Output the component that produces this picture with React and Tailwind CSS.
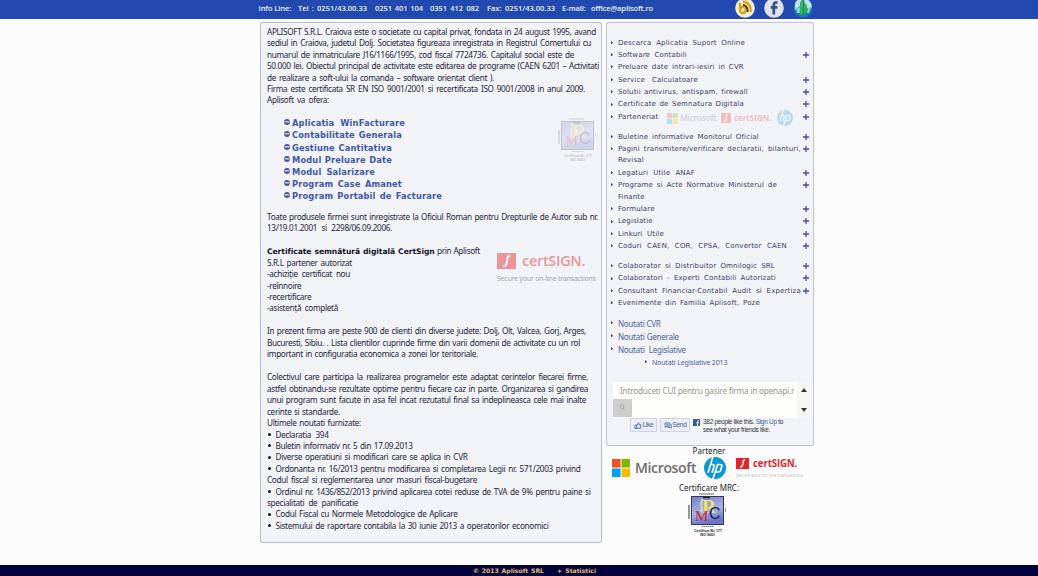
import React from "react";

function Line({ w = "", className = "", children }) {
  return (
    <div className={`h-[11.42px] leading-[11.42px] whitespace-nowrap ${w ? w + " [text-align-last:justify]" : ""} ${className}`}>
      {children}
    </div>
  );
}

function Bullet({ w, children }) {
  return (
    <div className="flex h-[11.42px] items-center">
      <span className="mr-[5px] ml-[0.5px] size-[3px] rounded-full bg-[#15152f]" />
      <Line w={w}>{children}</Line>
    </div>
  );
}

const products = [
  ["Aplicatia WinFacturare", "w-[113px]"],
  ["Contabilitate Generala", "w-[110px]"],
  ["Gestiune Cantitativa", "w-[100px]"],
  ["Modul Preluare Date", "w-[100px]"],
  ["Modul Salarizare", "w-[83px]"],
  ["Program Case Amanet", "w-[110px]"],
  ["Program Portabil de Facturare", "w-[150px]"],
];

const menuGroups = [
  [
    { lines: [["Descarca Aplicatia Suport Online", "w-[127px]"]] },
    { lines: [["Software Contabili", "w-[69px]"]], plus: true },
    { lines: [["Preluare date intrari-iesiri in CVR", "w-[126px]"]] },
    { lines: [["Service Calculatoare", "w-[80px]"]], plus: true },
    { lines: [["Solutii antivirus, antispam, firewall", "w-[130px]"]], plus: true },
    { lines: [["Certificate de Semnatura Digitala", "w-[126px]"]], plus: true },
    { lines: [["Parteneriat", "w-[43px]"]], plus: true, logos: true },
  ],
  [
    { lines: [["Buletine informative Monitorul Oficial", "w-[141px]"]], plus: true },
    { lines: [["Pagini transmitere/verificare declaratii, bilanturi,", "w-[183px]"], ["Revisal", "w-[28px]"]], plus: true },
    { lines: [["Legaturi Utile ANAF", "w-[77px]"]], plus: true },
    { lines: [["Programe si Acte Normative Ministerul de", "w-[159px]"], ["Finante", "w-[28px]"]], plus: true },
    { lines: [["Formulare", "w-[38px]"]], plus: true },
    { lines: [["Legislatie", "w-[37px]"]], plus: true },
    { lines: [["Linkuri Utile", "w-[46px]"]], plus: true },
    { lines: [["Coduri CAEN, COR, CPSA, Convertor CAEN", "w-[169px]"]], plus: true },
  ],
  [
    { lines: [["Colaborator si Distribuitor Omnilogic SRL", "w-[157px]"]], plus: true },
    { lines: [["Colaboratori - Experti Contabili Autorizati", "w-[158px]"]], plus: true },
    { lines: [["Consultant Financiar-Contabil Audit si Expertiza", "w-[183px]"]], plus: true },
    { lines: [["Evenimente din Familia Aplisoft, Poze", "w-[142px]"]] },
  ],
];

function Arrow() {
  return (
    <svg viewBox="0 0 3 4" className="mt-[4.2px] mr-[4.5px] h-[3.4px] w-[2.4px] shrink-0">
      <path d="M0 0L3 2L0 4Z" fill="#4a4a66" />
    </svg>
  );
}

function Plus() {
  return (
    <svg viewBox="0 0 6 6" className="mt-[3px] size-[6px] shrink-0">
      <path d="M3 0V6M0 3H6" stroke="#4a4aa6" strokeWidth="1.3" />
    </svg>
  );
}

function MenuItem({ item }) {
  return (
    <li className={`flex items-start ${item.lines.length > 1 ? "h-[23.9px]" : "h-[12.4px]"}`}>
      <Arrow />
      <div className="flex flex-1 items-start">
        <div>
          {item.lines.map(([text, w]) => (
            <div key={text} className={`h-[11.5px] leading-[12.4px] whitespace-nowrap [text-align-last:justify] ${w}`}>{text}</div>
          ))}
        </div>
        {item.logos && (
          <div className="ml-[6px] flex h-[15px] items-center tracking-normal opacity-25">
            <MsSquares className="size-[11px]" />
            <span className="ml-[2px] w-[37px] font-['Open_Sans',sans-serif] text-[8.5px] font-semibold tracking-[-0.3px] text-[#737373]">Microsoft</span>
            <CertMark className="ml-[4px] size-[10px]" />
            <span className="ml-[3px] w-[43px] font-['Open_Sans',sans-serif] text-[8px] font-bold text-[#e2202c]">certSIGN.</span>
            <Hp className="size-[16px]" />
          </div>
        )}
      </div>
      {item.plus && <Plus />}
    </li>
  );
}

function MsSquares({ className }) {
  return (
    <svg viewBox="0 0 18 18" className={className}>
      <path fill="#f15022" d="M0 0h8.5v8.5H0z" />
      <path fill="#7db700" d="M9.5 0H18v8.5H9.500z" />
      <path fill="#00a1f1" d="M0 9.500h8.500V18H0z" />
      <path fill="#ffb900" d="M9.500 9.500H18V18H9.500z" />
    </svg>
  );
}

function CertMark({ className }) {
  return (
    <svg viewBox="0 0 18 16" preserveAspectRatio="none" className={className}>
      <rect width="18" height="16" fill="#e8202c" />
      <path d="M12.500 2.500C9.500 2.500 10 5 9.500 8S9 13.500 5.500 13.500" fill="none" stroke="#fff" strokeWidth="2" />
    </svg>
  );
}

function Hp({ className }) {
  return (
    <svg viewBox="0 0 22 22" className={className}>
      <circle cx="11" cy="11" r="11" fill="#0b96d6" />
      <g fill="none" stroke="#fff" strokeWidth="1.7">
        <path d="M8.800 0L4 15.700M6.500 7.500H8.800Q10.600 7.500 10 9.500L8 15.700" />
        <path d="M13.700 7L8.900 22M13.300 7.500H16.200Q18.300 7.500 17.700 9.700L16.600 13.200Q16.100 15 14.300 15H11.300" />
      </g>
    </svg>
  );
}

function Mrc({ className }) {
  return (
    <svg viewBox="0 0 40 44" className={className}>
      <defs>
        <linearGradient id="mrc" x1="0" y1="0" x2="0.3" y2="1">
          <stop offset="0" stopColor="#7680c4" />
          <stop offset="0.6" stopColor="#a9b2e4" />
          <stop offset="1" stopColor="#6875c8" />
        </linearGradient>
      </defs>
      <path d="M12 1H27" stroke="#555" strokeWidth="1.100" strokeDasharray="1.7 .3" />
      <path d="M2 12V26" stroke="#555" strokeWidth="1.400" strokeDasharray="1.7 .3" />
      <path d="M38.500 15V19" stroke="#999" strokeWidth="1" />
      <rect x="4.500" y="3.500" width="32" height="28" fill="url(#mrc)" stroke="#35355c" />
      <path d="M16 4.500H23" stroke="#222" strokeWidth="1.500" />
      <path d="M14.500 19V8Q14.500 6.500 16 6.500" stroke="#d8d8c8" strokeWidth="2" fill="none" />
      <text x="15" y="20" fontFamily="Liberation Serif, serif" fontSize="19" fontWeight="bold" fill="#eee45c">R</text>
      <text x="8" y="28" fontFamily="Liberation Serif, serif" fontSize="15" fill="#cc2538">M</text>
      <text x="22" y="26" fontFamily="Liberation Sans, sans-serif" fontSize="16" fill="#171c5c">C</text>
      <path d="M15 33.500H27" stroke="#777" strokeWidth="1" strokeDasharray="1.500 .5" />
      <text x="7" y="38.500" textLength="28" lengthAdjust="spacingAndGlyphs" fontFamily="Liberation Sans, sans-serif" fontSize="3.800" fontWeight="bold" fill="#222">Certificat Nr. 177</text>
      <text x="13" y="43.300" textLength="15" lengthAdjust="spacingAndGlyphs" fontFamily="Liberation Sans, sans-serif" fontSize="3.600" fontWeight="bold" fill="#222">ISO 9001</text>
    </svg>
  );
}

function Header() {
  return (
    <header className="flex h-[19px] shrink-0 overflow-hidden bg-[#2149b0] pl-[258.500px]">
      <div className="flex items-start font-['Open_Sans',sans-serif] text-[7.5px] leading-[16px] font-semibold whitespace-nowrap text-[#edf1fb]">
        <span className="w-[31px] tracking-[-0.100px] [text-align-last:justify]">Info Line:</span>
        <span className="ml-[8.500px] w-[69px] [text-align-last:justify]">Tel : 0251/43.00.33</span>
        <span className="ml-[8px] w-[48px] [text-align-last:justify]">0251 401 104</span>
        <span className="ml-[7px] w-[49px] [text-align-last:justify]">0351 412 082</span>
        <span className="ml-[8px] w-[68px] [text-align-last:justify]">Fax: 0251/43.00.33</span>
        <span className="ml-[7px] w-[91px] tracking-[-0.100px] [text-align-last:justify]">E-mail: office@aplisoft.ro</span>
        <div className="-mt-[2.500px] ml-[82px] flex gap-[9px]">
          <svg viewBox="0 0 20 20" className="size-[20px]">
            <circle cx="10" cy="10" r="9.800" fill="#f3efe0" />
            <g fill="none" stroke="#d7a313" strokeWidth="2.300">
              <path d="M5 5V12.500M5 11.500a3 3 0 1 1 3 3.500q-3 0-3-3" />
              <path d="M8 6.800Q13 7.500 12.700 14" stroke="#44351a" strokeWidth="1.700" />
              <path d="M8 3.500Q16.500 5 15.800 14" />
            </g>
          </svg>
          <svg viewBox="0 0 20 20" className="size-[20px]">
            <circle cx="10" cy="10" r="9.800" fill="#dfe3ee" />
            <path d="M13.500 4.500H12Q9.800 4.500 9.800 7V16.500M6.800 9.300H13.300" fill="none" stroke="#354f8c" strokeWidth="2.700" />
          </svg>
          <svg viewBox="0 0 20 20" className="size-[20px]">
            <circle cx="10" cy="10" r="9.500" fill="#1d79ae" />
            <path d="M2 5Q5 0 9 1L7 8L2 12ZM11 1Q18 1 19 9L15 11L12 7Z" fill="#b8e3ea" />
            <path d="M7 4L10 2V16L7 17ZM11 5L14 7V14L11 16Z" fill="#36b44a" />
            <path d="M3 11L7 9V15L4 15ZM15 10L18 10L16 15H14Z" fill="#79d6cf" />
          </svg>
        </div>
      </div>
    </header>
  );
}

function MainPanel() {
  return (
    <main className="h-[521px] w-[342px] rounded-[3px] border border-[#bdbfc7] bg-[#f2f3f6] pt-[3px] pl-[6px] font-['Noto_Sans',sans-serif] text-[8.2px] tracking-[-0.32px] text-[#262640] shadow-[0_0_1px_#c5c7ce]">
      <Line w="w-[329px]">APLISOFT S.R.L. Craiova este o societate cu capital privat, fondata in 24 august 1995, avand</Line>
      <Line w="w-[324px]">sediul in Craiova, judetul Dolj. Societatea figureaza inregistrata in Registrul Comertului cu</Line>
      <Line w="w-[307px]">numarul de inmatriculare J16/1166/1995, cod fiscal 7724736. Capitalul social este de</Line>
      <Line w="w-[332px]">50.000 lei. Obiectul principal de activitate este editarea de programe (CAEN 6201 – Activitati</Line>
      <Line w="w-[227px]">de realizare a soft-ului la comanda – software orientat client ).</Line>
      <Line w="w-[318px]">Firma este certificata SR EN ISO 9001/2001 si recertificata ISO 9001/2008 in anul 2009.</Line>
      <Line w="w-[62px]">Aplisoft va ofera:</Line>
      <div className="mt-[11.500px] flex items-start">
        <ul className="w-[274px] pl-[17px] font-['DejaVu_Sans',sans-serif] text-[8.3px] font-bold tracking-[0.150px] text-[#3f58ab]">
          {products.map(([name, w]) => (
            <li key={name} className="flex h-[12.1px] items-start leading-[12.1px]">
              <svg viewBox="0 0 6 6" className="mt-[2px] mr-[2px] size-[6px] shrink-0">
                <circle cx="3" cy="3" r="2.900" fill="#49558d" />
                <path d="M.8 2.800H5.200" stroke="#e8ebf5" strokeWidth="1.200" />
              </svg>
              <span className={`whitespace-nowrap [text-align-last:justify] ${w}`}>{name}</span>
            </li>
          ))}
        </ul>
        <Mrc className="mt-[0.500px] ml-[16px] h-[44px] w-[40px] tracking-normal opacity-25" />
      </div>
      <Line className="mt-[9px]" w="w-[331px]">Toate produsele firmei sunt inregistrate la Oficiul Roman pentru Drepturile de Autor sub nr.</Line>
      <Line w="w-[125px]">13/19.01.2001 si 2298/06.09.2006.</Line>
      <div className="mt-[11.500px] flex items-start">
        <div className="w-[230px]">
          <Line w="w-[213px]"><b className="font-['DejaVu_Sans',sans-serif] text-[7.600px] tracking-[-0.050px] text-[#14142e]">Certificate semnătură digitală CertSign</b> prin Aplisoft</Line>
          <Line w="w-[85px]">S.R.L partener autorizat</Line>
          <Line w="w-[83px]">-achiziție certificat nou</Line>
          <Line w="w-[36px]">-reînnoire</Line>
          <Line w="w-[47px]">-recertificare</Line>
          <Line w="w-[71px]">-asistență completă</Line>
        </div>
        <div className="mt-[8px] w-[98px] font-['Open_Sans',sans-serif] opacity-45">
          <div className="flex items-center">
            <CertMark className="h-[16px] w-[19px]" />
            <span className="ml-[6px] text-[14.500px] leading-[16px] font-semibold tracking-[-0.300px] text-[#e8202c]">certSIGN.</span>
          </div>
          <div className="mt-[5px] w-[97px] text-[6.900px] leading-[9px] tracking-[-0.150px] whitespace-nowrap text-[#333] [text-align-last:justify]">Secure your on-line transactions</div>
        </div>
      </div>
      <Line className="mt-[11.500px]" w="w-[319px]">In prezent firma are peste 900 de clienti din diverse judete: Dolj, Olt, Valcea, Gorj, Arges,</Line>
      <Line w="w-[313px]">Bucuresti, Sibiu. . Lista clientilor cuprinde firme din varii domenii de activitate cu un rol</Line>
      <Line w="w-[211px]">important in configuratia economica a zonei lor teritoriale.</Line>
      <Line className="mt-[12px]" w="w-[321px]">Colectivul care participa la realizarea programelor este adaptat cerintelor fiecarei firme,</Line>
      <Line w="w-[321px]">astfel obtinandu-se rezultate optime pentru fiecare caz in parte. Organizarea si gandirea</Line>
      <Line w="w-[319px]">unui program sunt facute in asa fel incat rezutatul final sa indeplineasca cele mai inalte</Line>
      <Line w="w-[73px]">cerinte si standarde.</Line>
      <Line w="w-[94px]">Ultimele noutati furnizate:</Line>
      <Bullet w="w-[53px]">Declaratia 394</Bullet>
      <Bullet w="w-[137px]">Buletin informativ nr. 5 din 17.09.2013</Bullet>
      <Bullet w="w-[192px]">Diverse operatiuni si modificari care se aplica in CVR</Bullet>
      <Bullet w="w-[305px]">Ordonanta nr. 16/2013 pentru modificarea si completarea Legii nr. 571/2003 privind</Bullet>
      <Line w="w-[210px]">Codul fiscal si reglementarea unor masuri fiscal-bugetare</Line>
      <Bullet w="w-[315px]">Ordinul nr. 1436/852/2013 privind aplicarea cotei reduse de TVA de 9% pentru paine si</Bullet>
      <Line w="w-[91px]">specialitati de panificatie</Line>
      <Bullet w="w-[182px]">Codul Fiscal cu Normele Metodologice de Aplicare</Bullet>
      <Bullet w="w-[273px]">Sistemului de raportare contabila la 30 iunie 2013 a operatorilor economici</Bullet>
    </main>
  );
}

function CompanySearch() {
  return (
    <div className="mt-[13px] ml-[2px] flex h-[36px] w-[200px]">
      <div className="flex w-[184px] flex-col bg-[#fdfdfb]">
        <div className="h-[17px] overflow-hidden pl-[7px] text-[8.200px] leading-[17px] tracking-[-0.200px] whitespace-nowrap text-[#99988f]">
          <div className="w-[170px] [text-align-last:justify]">Introduceti CUI pentru gasire firma in openapi.r</div>
        </div>
        <div className="flex h-[18px] w-[19px] items-center justify-center bg-[#cdcdcd]">
          <svg viewBox="0 0 8 8" className="size-[7px]" fill="none" stroke="#a5a5a5">
            <circle cx="3.500" cy="3" r="2.200" />
            <path d="M5 5L7 7.500" />
          </svg>
        </div>
      </div>
      <div className="flex flex-1 flex-col items-center justify-between bg-[#f5f5f3] py-[6px] pr-[3px]">
        <svg viewBox="0 0 6 4" className="h-[4px] w-[6px]"><path d="M0 4L3 0L6 4Z" fill="#333" /></svg>
        <svg viewBox="0 0 6 4" className="h-[4px] w-[6px]"><path d="M0 0L3 4L6 0Z" fill="#333" /></svg>
      </div>
    </div>
  );
}

function SocialBar() {
  return (
    <div className="ml-[19px] flex items-start font-['Liberation_Sans',sans-serif] text-[6.500px] text-[#333]">
      <div className="mt-[0.500px] flex h-[14px] w-[27px] items-center justify-center gap-[1px] rounded-[1px] border border-[#cad4e7] bg-[#eceef5] tracking-[-0.300px] text-[#3b5998]">
        <svg viewBox="0 0 9 8" className="h-[7px] w-[8px]" fill="none" stroke="#3b5998" strokeWidth=".9"><path d="M1 3.500H3V7.500H1ZM3 4L5 .8Q6.300 1 5.500 3.300H8L7.500 7.200H3" /></svg>
        Like
      </div>
      <div className="mt-[0.500px] ml-[3px] flex h-[14px] w-[30px] items-center justify-center gap-[1px] rounded-[1px] border border-[#cad4e7] bg-[#eceef5] tracking-[-0.300px] text-[#3b5998]">
        <svg viewBox="0 0 9 8" className="h-[7px] w-[8px]" fill="none" stroke="#3b5998" strokeWidth=".8"><path d="M1 1H6.500V5H3L1.500 6.500V5H1ZM7 3H8.300V7L7 6.200H4M2.500 2.500H5.200M2.500 3.700H5" /></svg>
        Send
      </div>
      <svg viewBox="0 0 7 7" className="mt-[1px] ml-[3px] size-[7px]"><rect width="7" height="7" rx=".5" fill="#3b5998" /><path d="M6 1.700H5.200Q4.600 1.700 4.600 2.500V7M3.400 3.800H5.800" stroke="#fff" fill="none" /></svg>
      <div className="mt-[0.500px] ml-[3px] leading-[7.600px] tracking-[-0.300px] whitespace-nowrap">
        <div className="w-[78px] [text-align-last:justify]">382 people like this. <span className="text-[#3b5998]">Sign Up</span> to</div>
        <div className="w-[64px] [text-align-last:justify]">see what your friends like.</div>
      </div>
    </div>
  );
}

function Sidebar() {
  return (
    <aside className="ml-[4px] w-[208px] font-['Noto_Sans',sans-serif]">
      <div className="h-[424px] rounded-[3px] border border-[#c3c5ce] bg-[#f2f3f6] pt-[13.500px] pr-[4px] pl-[4px] shadow-[0_0_1px_#c5c7ce]">
        <nav className="flex flex-col gap-[7.300px] font-['DejaVu_Sans',sans-serif] text-[7px] tracking-[0.160px] text-[#3d3d66]">
          {menuGroups.map((group, i) => (
            <ul key={i}>
              {group.map((item) => <MenuItem key={item.lines[0][0]} item={item} />)}
            </ul>
          ))}
        </nav>
        <ul className="mt-[7px] text-[8px] leading-[13px] tracking-[-0.220px] whitespace-nowrap text-[#4a62a3]">
          <li className="flex h-[13px]"><Arrow /><span className="w-[42px] [text-align-last:justify]">Noutati CVR</span></li>
          <li className="flex h-[13px]"><Arrow /><span className="w-[61px] [text-align-last:justify]">Noutati Generale</span></li>
          <li className="flex h-[13px]"><Arrow /><span className="w-[68px] [text-align-last:justify]">Noutati Legislative</span></li>
          <li className="flex h-[13px] pl-[34px] text-[7px] tracking-[-0.150px]"><Arrow /><span className="w-[74px] [text-align-last:justify]">Noutati Legislative 2013</span></li>
        </ul>
        <CompanySearch />
        <SocialBar />
      </div>
      <div className="text-[8px] text-[#22222c]">
        <div className="-ml-[2px] h-[9px] text-center leading-[10px]">Partener</div>
        <div className="mt-[1px] flex h-[24px] items-center pl-[6px] font-['Open_Sans',sans-serif]">
          <MsSquares className="size-[18px]" />
          <span className="ml-[5px] w-[62px] text-[14px] leading-[20px] font-semibold tracking-[-0.350px] text-[#6e6e6e]">Microsoft</span>
          <Hp className="ml-[7px] size-[22px]" />
          <div className="mt-[1px] ml-[10px]">
            <div className="flex items-center">
              <CertMark className="h-[11px] w-[13px]" />
              <span className="ml-[4px] text-[9.800px] leading-[11px] font-bold tracking-[-0.200px] text-[#df2932]">certSIGN.</span>
            </div>
            <div className="mt-[2px] w-[67px] text-[4.800px] leading-[8px] tracking-[-0.160px] whitespace-nowrap text-[#c4c4c8] [text-align-last:justify]">Secure your on-line transactions</div>
          </div>
        </div>
        <div className="-ml-[2px] mt-[2px] h-[11px] text-center leading-[11px]">Certificare MRC:</div>
        <Mrc className="ml-[81px] h-[44px] w-[40px]" />
      </div>
    </aside>
  );
}

export default function App() {
  return (
    <div className="flex h-[576px] w-[1038px] flex-col overflow-hidden bg-[#fcfcfd]">
      <Header />
      <div className="flex flex-1 items-start pt-[3px] pl-[260px]">
        <MainPanel />
        <Sidebar />
      </div>
      <footer className="flex h-[11px] shrink-0 bg-[#030339] pl-[473px] font-['DejaVu_Sans',sans-serif] text-[6.100px] leading-[12.500px] font-bold whitespace-nowrap text-[#e3bd76]">
        <span className="w-[71px] [text-align-last:justify]">© 2013 Aplisoft SRL</span>
        <span className="ml-[13px] w-[39px] [text-align-last:justify]">+ Statistici</span>
      </footer>
    </div>
  );
}
